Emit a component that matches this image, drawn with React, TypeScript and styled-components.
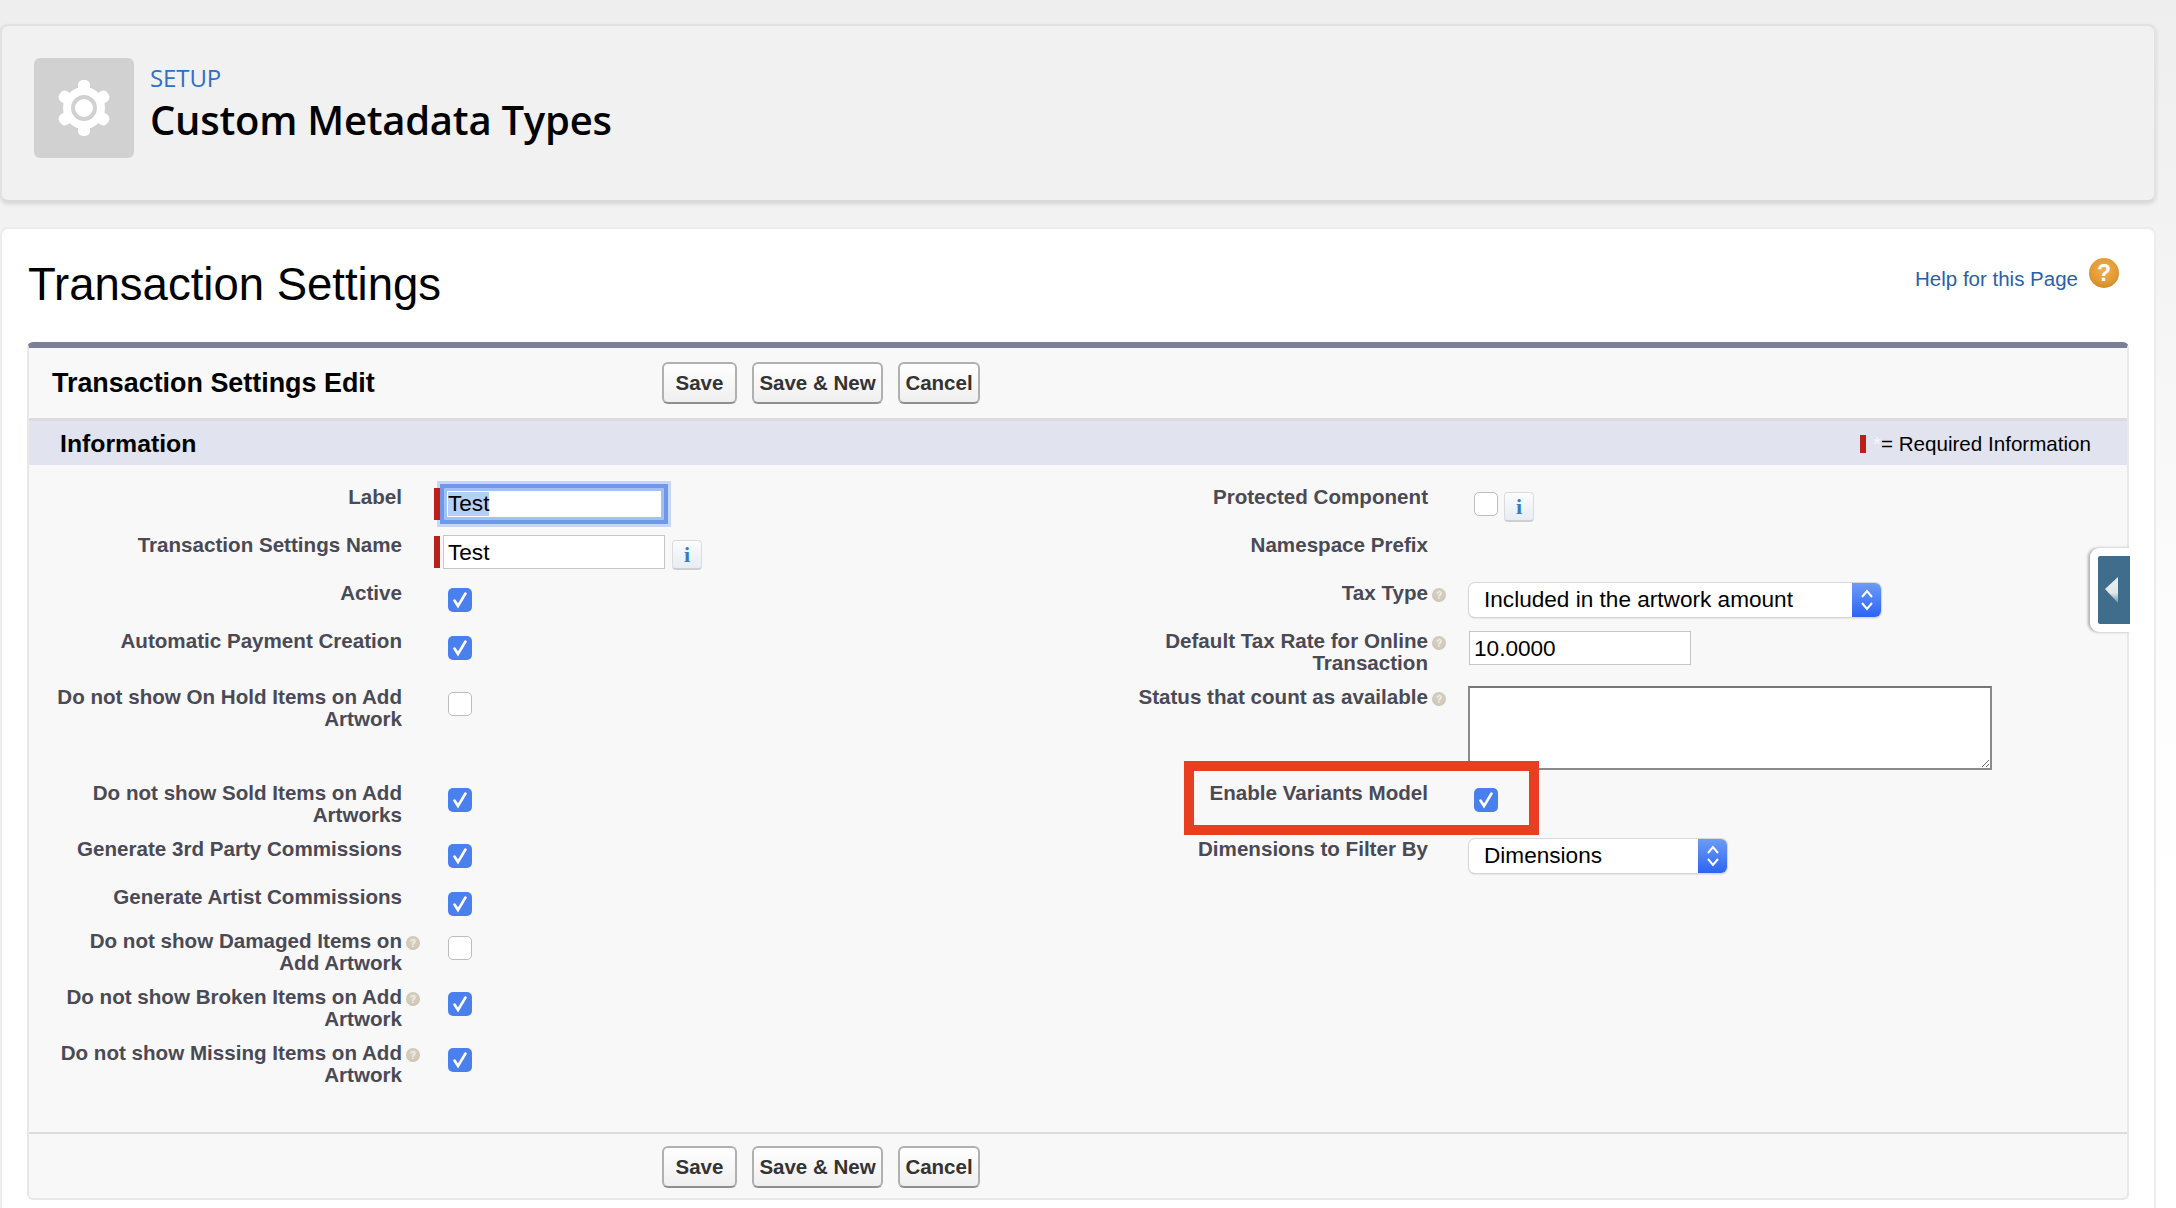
import React from 'react'
import styled, { createGlobalStyle } from 'styled-components'

const GlobalStyle = createGlobalStyle`
  html, body {
    margin: 0;
    height: 1208px;
    overflow: hidden;
  }
  body {
    font-family: "Liberation Sans", Arial, sans-serif;
    color: #000;
  }
`

const Page = styled.div`
  width: 2176px;
  height: 1208px;
  box-sizing: border-box;
  padding: 24px 20px 0 0;
  overflow: hidden;
  background: linear-gradient(#eeeeee 0, #f3f3f3 240px, #fcfcfc 620px, #ffffff 900px);
`

const TopCard = styled.header`
  height: 178px;
  box-sizing: border-box;
  display: flex;
  align-items: flex-start;
  gap: 16px;
  padding: 32px 32px;
  background: #f1f1f1;
  border: 2px solid #e2e2e2;
  border-bottom-color: #d9d9d9;
  border-radius: 8px;
  box-shadow: 0 2px 4px rgba(0, 0, 0, 0.12);
`

const IconTile = styled.div`
  width: 100px;
  height: 100px;
  flex: none;
  display: flex;
  align-items: center;
  justify-content: center;
  background: #d1d1d1;
  border-radius: 6px;
`

const Titles = styled.div`
  display: flex;
  flex-direction: column;
`

const Eyebrow = styled.span`
  margin-top: 5px;
  font-family: "Open Sans", sans-serif;
  font-size: 24px;
  line-height: 30px;
  letter-spacing: -0.1px;
  color: #2f6fc9;
`

const ObjectTitle = styled.h2`
  margin: 1px 0 0;
  font-family: "Open Sans", sans-serif;
  font-size: 40px;
  line-height: 52px;
  font-weight: 600;
  letter-spacing: -0.25px;
  color: #000;
`

const MainCard = styled.main`
  margin-top: 25px;
  height: 1100px;
  box-sizing: border-box;
  padding: 0 25px;
  background: #fff;
  border: 2px solid #ececec;
  border-radius: 8px;
  position: relative;
`

const TitleBar = styled.div`
  height: 113px;
  display: flex;
  justify-content: space-between;
  align-items: flex-start;
`

const PageTitle = styled.h1`
  margin: 26px 0 0 1px;
  font-size: 45.5px;
  line-height: 60px;
  font-weight: 400;
  color: #000;
`

const HelpLink = styled.a`
  display: flex;
  align-items: flex-start;
  gap: 11px;
  margin: 29px 10px 0 0;
  font-size: 20.5px;
  line-height: 26px;
  color: #2a5fa8;
  span:first-child {
    margin-top: 8px;
  }
`

const HelpBall = styled.span`
  width: 30px;
  height: 30px;
  display: flex;
  align-items: center;
  justify-content: center;
  border-radius: 50%;
  font-weight: 700;
  font-size: 23px;
  color: #fff;
  background: radial-gradient(circle at 50% 40%, #f0b050 0, #e29a34 55%, #b97a28 100%);
`

const Panel = styled.section`
  box-sizing: border-box;
  height: 858px;
  border: 2px solid #e8e8e8;
  border-top: 6px solid #7a8099;
  border-radius: 6px;
  background: #f8f8f8;
  display: flex;
  flex-direction: column;
`

const PanelHeader = styled.div`
  height: 70px;
  flex: none;
  display: flex;
  align-items: center;
  padding-left: 23px;
`

const PanelTitle = styled.h2`
  margin: 0;
  width: 610px;
  font-size: 26.9px;
  font-weight: 700;
  color: #000;
`

const ButtonRow = styled.div`
  display: flex;
  gap: 15px;
`

const Button = styled.button<{ $w: number }>`
  width: ${p => p.$w}px;
  height: 42px;
  padding: 0;
  font-family: "Liberation Sans", Arial, sans-serif;
  font-size: 20.5px;
  font-weight: 700;
  color: #333;
  background: linear-gradient(#ffffff, #efefef);
  border: 2px solid #b0b0b0;
  border-bottom-color: #8f8f8f;
  border-radius: 6px;
`

const SectionBar = styled.div`
  height: 47px;
  flex: none;
  box-sizing: border-box;
  border-top: 3px solid #dcdcdc;
  display: flex;
  align-items: center;
  justify-content: space-between;
  padding: 1px 36px 0 31px;
  background: #e1e4ee;
`

const SectionTitle = styled.h3`
  margin: 0;
  font-size: 24.8px;
  font-weight: 700;
  color: #000;
`

const Legend = styled.div`
  display: flex;
  align-items: center;
  font-size: 20.6px;
  color: #000;
`

const LegendBar = styled.span`
  width: 6px;
  height: 18px;
  margin-right: 7px;
  background: #b8211a;
`

const LegendStar = styled.span`
  color: #f4f6fb;
`

const FormBody = styled.div`
  position: relative;
  flex: 1;
  padding-top: 16px;
`

const Row = styled.div<{ $h: number }>`
  height: ${p => p.$h}px;
  display: grid;
  grid-template-columns: 373px 728px 298px 1fr;
`

const Label = styled.label`
  padding-top: 5px;
  font-size: 20.6px;
  line-height: 22px;
  font-weight: 700;
  color: #4a4a56;
  text-align: right;
`

const WideLabel = styled(Label)`
  padding-left: 24px;
`

const ControlCell = styled.div`
  display: flex;
  align-items: flex-start;
`

const Slot = styled.span<{ $w: number }>`
  width: ${p => p.$w}px;
  flex: none;
  padding: 11px 0 0 4px;
  box-sizing: border-box;
`

const HelpDot = styled.span`
  width: 14px;
  height: 14px;
  display: flex;
  align-items: center;
  justify-content: center;
  border-radius: 50%;
  font-size: 10px;
  font-weight: 700;
  color: #f3efe6;
  background: radial-gradient(circle at 50% 40%, #d9d2c4 0, #cfc6b4 70%, #bdb4a2 100%);
`

const RequiredBar = styled.span<{ $top: number }>`
  position: relative;
  z-index: 1;
  width: 6px;
  height: 32px;
  flex: none;
  margin: ${p => p.$top}px 3px 0 0;
  background: #b8211a;
`

const Field = styled.div<{ $w: number }>`
  width: ${p => p.$w}px;
  height: 34px;
  margin-top: 6px;
  box-sizing: border-box;
  padding-left: 4px;
  background: #fff;
  border: 1.5px solid #c6c6c6;
  font-size: 22.6px;
  line-height: 33px;
  color: #000;
`

const FocusField = styled(Field)`
  height: 26px;
  margin: 10px 0 0 4px;
  border: none;
  padding-left: 1px;
  line-height: 26px;
  box-shadow: 0 0 0 3px #a3c0f3, 0 0 0 7px #6f97ea, 0 0 0 10px #c5d6f7;
`

const Selected = styled.span`
  display: inline-block;
  line-height: 24px;
  background: #b5d0f7;
`

const Box = styled.span<{ $on: boolean; $left: number }>`
  width: 24px;
  height: 24px;
  flex: none;
  box-sizing: border-box;
  margin: 11px 0 0 ${p => p.$left}px;
  border-radius: 5px;
  background: ${p => (p.$on ? '#4a80ee' : '#fff')};
  border: ${p => (p.$on ? 'none' : '1.5px solid #bdbdbd')};
`

const InfoButton = styled.span<{ $top: number; $left: number }>`
  width: 30px;
  height: 30px;
  flex: none;
  box-sizing: border-box;
  margin: ${p => p.$top}px 0 0 ${p => p.$left}px;
  display: flex;
  align-items: center;
  justify-content: center;
  font-family: "Liberation Serif", serif;
  font-weight: 700;
  font-size: 22px;
  color: #3c78c8;
  background: linear-gradient(#fbfcfe, #e6edf5);
  border: 1.5px solid #dcdcdc;
  border-bottom: 2.5px solid #cfcfcf;
  border-radius: 4px;
`

const Select = styled.div<{ $w: number }>`
  width: ${p => p.$w}px;
  height: 34px;
  margin-top: 6px;
  box-sizing: border-box;
  display: flex;
  justify-content: space-between;
  align-items: center;
  padding-left: 15px;
  background: #fff;
  border-radius: 6px;
  box-shadow: 0 0 0 1px #d8d8d8, 0 1px 2px rgba(0, 0, 0, 0.25);
  font-size: 22.6px;
  color: #000;
  overflow: hidden;
`

const SelectArrow = styled.span`
  width: 29px;
  height: 34px;
  flex: none;
  display: flex;
  align-items: center;
  justify-content: center;
  background: linear-gradient(#6d9cf5, #2c64f4);
`

const TextArea = styled.textarea`
  width: 524px;
  height: 84px;
  margin: 5px 0 0 -1px;
  box-sizing: border-box;
  background: #fff;
  border: 2px solid #8a8a8a;
  border-top-color: #767676;
  border-radius: 0;
  outline: none;
`

const Highlight = styled.div`
  position: absolute;
  left: 1155px;
  top: 296px;
  width: 355px;
  height: 74px;
  box-sizing: border-box;
  border: 10px solid #e83e22;
  pointer-events: none;
`

const PanelFooter = styled.div`
  height: 66px;
  flex: none;
  box-sizing: border-box;
  padding: 12px 0 0 633px;
  border-top: 2.5px solid #dcdcdc;
`

const SideTab = styled.div`
  position: absolute;
  left: 2088px;
  top: 319px;
  width: 40px;
  height: 84px;
  box-sizing: border-box;
  padding: 8px 0 8px 8px;
  background: #fff;
  border-radius: 9px 0 0 9px;
  box-shadow: -2px 0 3px rgba(0, 0, 0, 0.3);
`

const SideTabFace = styled.div`
  height: 100%;
  display: flex;
  align-items: center;
  justify-content: center;
  padding-right: 4px;
  background: #3f6d8b;
  border-radius: 2px 0 0 2px;
`

const GearIcon = () => (
  <svg width="56" height="56" viewBox="0 0 56 56">
    <g fill="#fff">
      <circle cx="28" cy="28" r="21" />
      <rect x="22" y="0" width="12" height="56" rx="5" />
      <rect x="22" y="0" width="12" height="56" rx="5" transform="rotate(60 28 28)" />
      <rect x="22" y="0" width="12" height="56" rx="5" transform="rotate(120 28 28)" />
    </g>
    <circle cx="28" cy="28" r="11" fill="#fff" stroke="#d1d1d1" strokeWidth="4" />
  </svg>
)

const UpDown = () => (
  <svg width="14" height="24" viewBox="0 0 14 24" fill="none" stroke="#fff" strokeWidth="2">
    <path d="M2 9l5-6 5 6" />
    <path d="M2 15l5 6 5-6" />
  </svg>
)

const CheckBox = ({ on, left }: { on: boolean; left: number }) => (
  <Box $on={on} $left={left}>
    {on && (
      <svg width="24" height="24" viewBox="0 0 24 24" fill="none" stroke="#fff" strokeWidth="2.6" strokeLinecap="round">
        <path d="M6.5 12.5l3.5 5.5L17.5 5.5" />
      </svg>
    )}
  </Box>
)

const LeftRow = ({ h, label, on, help }: { h: number; label: string; on: boolean; help?: boolean }) => (
  <Row $h={h}>
    <WideLabel>{label}</WideLabel>
    <ControlCell>
      <Slot $w={32}>{help && <HelpDot>?</HelpDot>}</Slot>
      <CheckBox on={on} left={14} />
    </ControlCell>
  </Row>
)

const ActionButtons = () => (
  <ButtonRow>
    <Button $w={75}>Save</Button>
    <Button $w={131}>Save &amp; New</Button>
    <Button $w={82}>Cancel</Button>
  </ButtonRow>
)

export default function App() {
  return (
    <Page>
      <GlobalStyle />
      <TopCard>
        <IconTile>
          <GearIcon />
        </IconTile>
        <Titles>
          <Eyebrow>SETUP</Eyebrow>
          <ObjectTitle>Custom Metadata Types</ObjectTitle>
        </Titles>
      </TopCard>

      <MainCard>
        <TitleBar>
          <PageTitle>Transaction Settings</PageTitle>
          <HelpLink>
            <span>Help for this Page</span>
            <HelpBall>?</HelpBall>
          </HelpLink>
        </TitleBar>

        <Panel>
          <PanelHeader>
            <PanelTitle>Transaction Settings Edit</PanelTitle>
            <ActionButtons />
          </PanelHeader>
          <SectionBar>
            <SectionTitle>Information</SectionTitle>
            <Legend>
              <LegendBar />
              <LegendStar>*</LegendStar>= Required Information
            </Legend>
          </SectionBar>

          <FormBody>
            <Row $h={48}>
              <WideLabel>Label</WideLabel>
              <ControlCell>
                <Slot $w={32} />
                <RequiredBar $top={7} />
                <FocusField $w={214}>
                  <Selected>Test</Selected>
                </FocusField>
              </ControlCell>
              <Label>Protected Component</Label>
              <ControlCell>
                <Slot $w={41} />
                <CheckBox on={false} left={5} />
                <InfoButton $top={11} $left={6}>i</InfoButton>
              </ControlCell>
            </Row>

            <Row $h={48}>
              <WideLabel>Transaction Settings Name</WideLabel>
              <ControlCell>
                <Slot $w={32} />
                <RequiredBar $top={7} />
                <Field $w={222}>Test</Field>
                <InfoButton $top={11} $left={7}>i</InfoButton>
              </ControlCell>
              <Label>Namespace Prefix</Label>
              <ControlCell />
            </Row>

            <Row $h={48}>
              <WideLabel>Active</WideLabel>
              <ControlCell>
                <Slot $w={32} />
                <CheckBox on left={14} />
              </ControlCell>
              <Label>Tax Type</Label>
              <ControlCell>
                <Slot $w={41}><HelpDot>?</HelpDot></Slot>
                <Select $w={412}>
                  Included in the artwork amount
                  <SelectArrow><UpDown /></SelectArrow>
                </Select>
              </ControlCell>
            </Row>

            <Row $h={56}>
              <WideLabel>Automatic Payment Creation</WideLabel>
              <ControlCell>
                <Slot $w={32} />
                <CheckBox on left={14} />
              </ControlCell>
              <Label>Default Tax Rate for Online Transaction</Label>
              <ControlCell>
                <Slot $w={41}><HelpDot>?</HelpDot></Slot>
                <Field $w={222}>10.0000</Field>
              </ControlCell>
            </Row>

            <Row $h={96}>
              <WideLabel>Do not show On Hold Items on Add Artwork</WideLabel>
              <ControlCell>
                <Slot $w={32} />
                <CheckBox on={false} left={14} />
              </ControlCell>
              <Label>Status that count as available</Label>
              <ControlCell>
                <Slot $w={41}><HelpDot>?</HelpDot></Slot>
                <TextArea readOnly />
              </ControlCell>
            </Row>

            <Row $h={56}>
              <WideLabel>Do not show Sold Items on Add Artworks</WideLabel>
              <ControlCell>
                <Slot $w={32} />
                <CheckBox on left={14} />
              </ControlCell>
              <Label>Enable Variants Model</Label>
              <ControlCell>
                <Slot $w={41} />
                <CheckBox on left={5} />
              </ControlCell>
            </Row>

            <Row $h={48}>
              <WideLabel>Generate 3rd Party Commissions</WideLabel>
              <ControlCell>
                <Slot $w={32} />
                <CheckBox on left={14} />
              </ControlCell>
              <Label>Dimensions to Filter By</Label>
              <ControlCell>
                <Slot $w={41} />
                <Select $w={258}>
                  Dimensions
                  <SelectArrow><UpDown /></SelectArrow>
                </Select>
              </ControlCell>
            </Row>

            <LeftRow h={44} label="Generate Artist Commissions" on />
            <LeftRow h={56} label="Do not show Damaged Items on Add Artwork" on={false} help />
            <LeftRow h={56} label="Do not show Broken Items on Add Artwork" on help />
            <LeftRow h={56} label="Do not show Missing Items on Add Artwork" on help />

            <Highlight />
          </FormBody>

          <PanelFooter>
            <ActionButtons />
          </PanelFooter>
        </Panel>

        <SideTab>
          <SideTabFace>
            <svg width="16" height="28" viewBox="0 0 16 28">
              <defs>
                <linearGradient id="tabArrow" x1="0" y1="0" x2="0" y2="1">
                  <stop offset="0" stopColor="#e8eef2" />
                  <stop offset="0.6" stopColor="#e4e8ea" />
                  <stop offset="1" stopColor="#6f93aa" />
                </linearGradient>
              </defs>
              <path d="M14 1L1 13l13 14z" fill="url(#tabArrow)" />
            </svg>
          </SideTabFace>
        </SideTab>
      </MainCard>
    </Page>
  )
}
